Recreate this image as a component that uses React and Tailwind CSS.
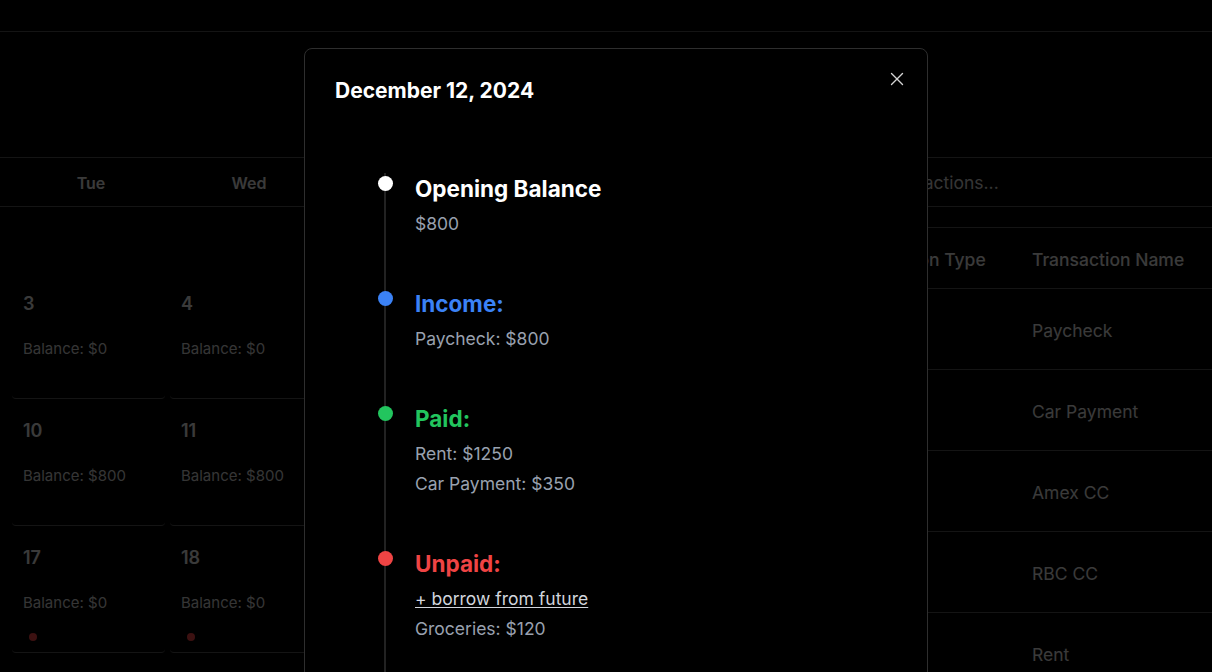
import { X } from 'lucide-react';

const weekDays = ['Tue', 'Wed', 'Thu', 'Fri', 'Sat'];

const weeks = [
  [3, 4, 5, 6, 7].map((d) => ({ day: d, balance: 0 })),
  [10, 11, 12, 13, 14].map((d) => ({ day: d, balance: 800 })),
  [17, 18, 19, 20, 21].map((d) => ({ day: d, balance: 0, unpaid: d < 19 })),
  [24, 25, 26, 27, 28].map((d) => ({ day: d, balance: 0 })),
];

const transactions = [
  { type: 'Income', name: 'Paycheck' },
  { type: 'Expense', name: 'Car Payment' },
  { type: 'Card', name: 'Amex CC' },
  { type: 'Card', name: 'RBC CC' },
  { type: 'Expense', name: 'Rent' },
];

// timeline sections for the selected day
const sections = [
  { title: 'Opening Balance', color: 'text-white', dot: 'bg-white', items: ['$800'] },
  { title: 'Income:', color: 'text-[#3b82f6]', dot: 'bg-[#3b82f6]', items: ['Paycheck: $800'] },
  { title: 'Paid:', color: 'text-[#22c55e]', dot: 'bg-[#22c55e]', items: ['Rent: $1250', 'Car Payment: $350'] },
  { title: 'Unpaid:', color: 'text-[#ef4444]', dot: 'bg-[#ef4444]', borrow: true, items: ['Groceries: $120'] },
  { title: 'Closing Balance', color: 'text-white', dot: 'bg-white', items: ['-$920'] },
];

function DayCell({ cell }) {
  return (
    <div className="h-[127px] rounded-sm border-b border-neutral-600 px-[11px] pt-[18px]">
      <div className="text-lg font-semibold leading-7">{cell.day}</div>
      <div className="mt-[21px] text-[15px] leading-5 text-neutral-300">Balance: ${cell.balance}</div>
      {cell.unpaid && <div className="ml-1.5 mt-5 h-2 w-2 rounded-full bg-[#ef4444]" />}
    </div>
  );
}

function DayDialog() {
  return (
    <div className="absolute left-[304px] top-12 h-[700px] w-[624px] overflow-hidden rounded-lg border border-[#2e2e2e] bg-black px-[30px] pt-7">
      <div className="flex items-start justify-between">
        <h2 className="text-[21px] font-bold leading-7 text-white">December 12, 2024</h2>
        <button className="mr-[-11px] mt-[-9px] text-neutral-300">
          <X size={22} strokeWidth={1.5} />
        </button>
      </div>

      <div className="relative ml-[49px] mt-[68px] border-l-2 border-[#222]">
        {sections.map((s) => (
          <div key={s.title} className="relative mb-[50px] pl-[29px]">
            <span className={`absolute -left-[8.5px] top-[3px] h-[15px] w-[15px] rounded-full ${s.dot}`} />
            <h3 className={`text-[22.5px] font-bold leading-8 ${s.color}`}>{s.title}</h3>
            <div className="mt-[5px] flex flex-col gap-0.5 text-[17.5px] leading-7 text-gray-400">
              {s.borrow && (
                <button className="w-fit text-left text-gray-300 underline underline-offset-2">+ borrow from future</button>
              )}
              {s.items.map((it) => (
                <div key={it}>{it}</div>
              ))}
            </div>
          </div>
        ))}
      </div>
    </div>
  );
}

export default function App() {
  return (
    <div className="relative h-[672px] overflow-hidden bg-black font-[Inter,sans-serif] text-neutral-200">
      <header className="h-8 border-b border-neutral-600" />

      <main className="flex pt-[125px]">
        <section className="w-[803px] shrink-0">
          <div className="grid h-[50px] grid-cols-[repeat(5,158px)] items-center border-y border-neutral-600 pl-3">
            {weekDays.map((d) => (
              <div key={d} className="pt-0.5 text-center font-semibold">{d}</div>
            ))}
          </div>
          <div className="ml-3 mt-[65px] grid grid-cols-[repeat(5,153px)] gap-x-[5px]">
            {weeks.flat().map((cell) => (
              <DayCell key={cell.day} cell={cell} />
            ))}
          </div>
        </section>

        <section className="flex-1">
          <div className="flex h-[50px] items-center border-y border-neutral-600 px-4 pt-0.5 text-[17.5px] text-neutral-300">
            Search transactions...
          </div>
          <div className="ml-[22px] mt-5 border-t border-neutral-600 text-[17.5px]">
            <div className="flex h-[61px] items-center border-b border-neutral-600 pt-1 font-medium">
              <div className="w-[191px] shrink-0 whitespace-nowrap px-4">Transaction Type</div>
              <div className="whitespace-nowrap px-4">Transaction Name</div>
            </div>
            {transactions.map((t) => (
              <div key={t.name} className="flex h-[81px] items-center border-b border-neutral-600 pt-1">
                <div className="w-[191px] shrink-0 px-4">{t.type}</div>
                <div className="whitespace-nowrap px-4">{t.name}</div>
              </div>
            ))}
          </div>
        </section>
      </main>

      <div className="absolute inset-0 bg-black/75" />
      <DayDialog />
    </div>
  );
}
